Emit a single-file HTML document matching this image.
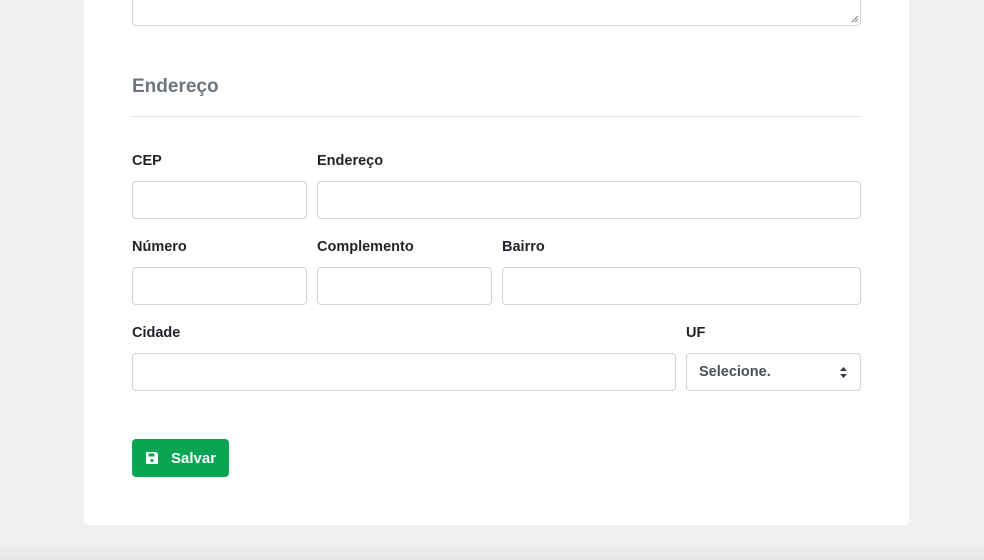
<!DOCTYPE html>
<html><head><style>
body{margin:0;width:984px;height:560px;background:#f0f0f0;position:relative;overflow:hidden;font-family:"Liberation Sans",sans-serif}
.card{position:absolute;left:84px;top:-10px;width:825px;height:535px;background:#fff;border-radius:0 0 4px 4px}
.shadow{position:absolute;left:0;top:540px;width:984px;height:20px;background:linear-gradient(#f0f0f0,#e6e6e6)}
.in{position:absolute;border:1px solid #ced4da;border-radius:4px;background:#fff;box-sizing:border-box;height:38px}
.lb{position:absolute;font-size:14.5px;font-weight:bold;color:#212529}
</style></head><body>
<div class="shadow"></div>
<div class="card"></div>
<div class="in" style="left:132px;top:-12px;width:729px;height:38px"></div>
<svg style="position:absolute;left:851px;top:15px" width="8" height="8"><path d="M1 7L7 1M4 7L7 4" stroke="#888" stroke-width="1"/></svg>
<div style="position:absolute;left:132px;top:76px;font-size:19px;font-weight:bold;color:#6c757d">Endereço</div>
<div style="position:absolute;left:132px;top:116px;width:729px;height:1px;background:#e3e3e3"></div>
<div class="lb" style="left:132px;top:153px">CEP</div>
<div class="lb" style="left:317px;top:153px">Endereço</div>
<div class="in" style="left:132px;top:181px;width:175px"></div>
<div class="in" style="left:317px;top:181px;width:544px"></div>
<div class="lb" style="left:132px;top:239px">Número</div>
<div class="lb" style="left:317px;top:239px">Complemento</div>
<div class="lb" style="left:502px;top:239px">Bairro</div>
<div class="in" style="left:132px;top:267px;width:175px"></div>
<div class="in" style="left:317px;top:267px;width:175px"></div>
<div class="in" style="left:502px;top:267px;width:359px"></div>
<div class="lb" style="left:132px;top:325px">Cidade</div>
<div class="lb" style="left:686px;top:325px">UF</div>
<div class="in" style="left:132px;top:353px;width:544px"></div>
<div class="in" style="left:686px;top:353px;width:175px"><span style="position:absolute;left:12px;top:10px;font-size:14.5px;font-weight:bold;color:#495057">Selecione.</span>
<svg style="position:absolute;left:152px;top:12px" width="10" height="13"><path d="M1 5L4.5 1L8 5ZM1 8L4.5 12L8 8Z" fill="#343a40"/></svg></div>
<div style="position:absolute;left:132px;top:439px;width:97px;height:38px;background:#0aa552;border-radius:4px;color:#fff;font-size:15px;font-weight:bold">
<svg style="position:absolute;left:13px;top:12px" width="14" height="14"><path d="M1 1H11L13 3V13H1Z" fill="#fff"/><rect x="3.5" y="2.5" width="6" height="3" fill="#0aa552"/><circle cx="7" cy="9.5" r="1.6" fill="#0aa552"/></svg>
<span style="position:absolute;left:39px;top:11px">Salvar</span></div>
</body></html>
